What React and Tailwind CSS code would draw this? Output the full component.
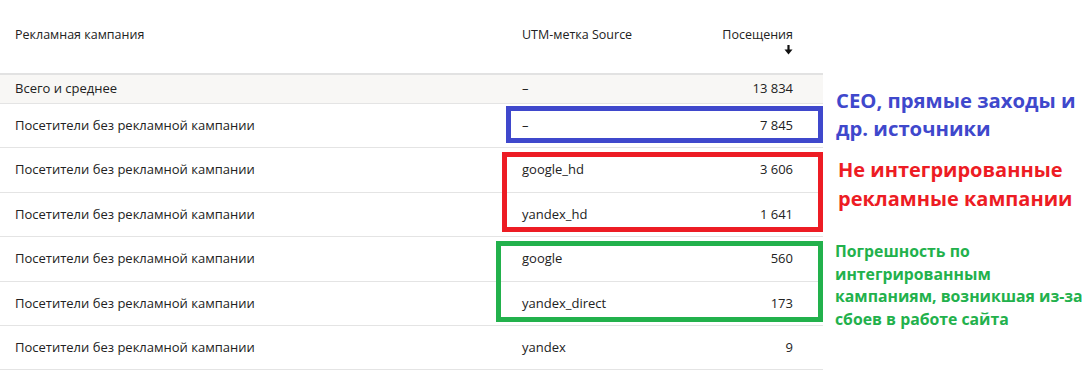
import React from 'react';

const rows = [
  { name: 'Посетители без рекламной кампании', utm: '–', visits: '7 845' },
  { name: 'Посетители без рекламной кампании', utm: 'google_hd', visits: '3 606' },
  { name: 'Посетители без рекламной кампании', utm: 'yandex_hd', visits: '1 641' },
  { name: 'Посетители без рекламной кампании', utm: 'google', visits: '560' },
  { name: 'Посетители без рекламной кампании', utm: 'yandex_direct', visits: '173' },
  { name: 'Посетители без рекламной кампании', utm: 'yandex', visits: '9' },
];

const SortArrow = () => (
  <svg width="9" height="10" viewBox="0 0 9 10" className="mt-0 mr-[0px]">
    <path d="M4.5 0 V5.5" stroke="#111" strokeWidth="2.2" />
    <path d="M0.5 4.5 H8.5 L4.5 9.5 Z" fill="#111" />
  </svg>
);

const App = () => {
  return (
    <div className="flex w-[1091px] h-[376px] bg-white overflow-hidden text-[#222]" style={{ fontFamily: '"Open Sans", sans-serif' }}>
      {/* Table */}
      <div className="relative w-[823px] shrink-0">
        {/* Header */}
        <div className="flex items-start h-[75px] pt-[26px] pl-[15px] pr-[30px] text-[12.5px] border-b-2 border-[#e2e2e2]">
          <div className="flex-1">Рекламная кампания</div>
          <div className="w-[200px]">UTM-метка Source</div>
          <div className="flex flex-col items-end w-[71px]">
            <span>Посещения</span>
            <SortArrow />
          </div>
        </div>

        {/* Total row */}
        <div className="flex items-center h-[29px] pl-[15px] pr-[30px] text-[13px] bg-[#f8f7f5] border-b border-[#e4e4e4]">
          <div className="flex-1">Всего и среднее</div>
          <div className="w-[200px]">–</div>
          <div className="w-[71px] text-right">13 834</div>
        </div>

        {rows.map((r, i) => (
          <div key={i} className="flex items-center h-[44.4px] pl-[15px] pr-[30px] text-[13px] border-b border-[#e4e4e4]">
            <div className="flex-1">{r.name}</div>
            <div className="w-[200px]">{r.utm}</div>
            <div className="w-[71px] text-right">{r.visits}</div>
          </div>
        ))}

        {/* Annotation frames */}
        <div className="absolute left-[506px] top-[106px] w-[317px] h-[37px] border-[5px] border-[#3f48cc]" />
        <div className="absolute left-[502px] top-[152px] w-[321px] h-[80px] border-[5px] border-[#ed1c24]" />
        <div className="absolute left-[496px] top-[241px] w-[327px] h-[81px] border-[5px] border-[#22b14c]" />
      </div>

      {/* Notes */}
      <div className="flex flex-col pl-[13px] pt-[86px] font-bold whitespace-nowrap">
        <div className="text-[20.3px] leading-[28px] text-[#3f48cc]">
          <div>СЕО, прямые заходы и</div>
          <div>др. источники</div>
        </div>
        <div className="mt-[13px] pl-[2px] text-[20px] leading-[29px] text-[#ed1c24]">
          <div>Не интегрированные</div>
          <div>рекламные кампании</div>
        </div>
        <div className="mt-[27px] -ml-[1px] text-[15.8px] leading-[22.5px] text-[#22b14c]">
          <div>Погрешность по</div>
          <div>интегрированным</div>
          <div>кампаниям, возникшая из-за</div>
          <div>сбоев в работе сайта</div>
        </div>
      </div>
    </div>
  );
};

export default App;
